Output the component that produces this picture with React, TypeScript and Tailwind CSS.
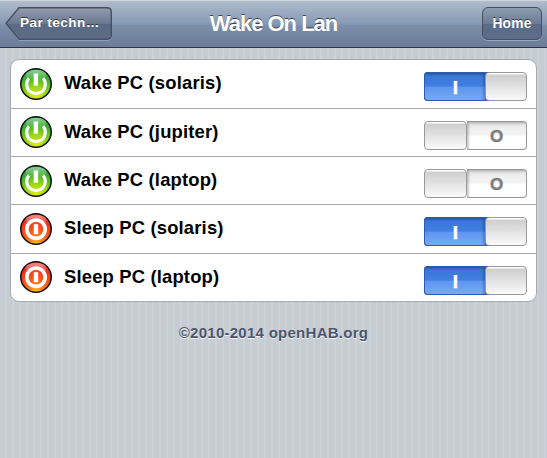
import React from "react";

type Item = { label: string; kind: "wake" | "sleep"; on: boolean; row: string; icon: string };

const items: Item[] = [
  { label: "Wake PC (solaris)", kind: "wake", on: true, row: "h-[49px] border-b", icon: "mt-2" },
  { label: "Wake PC (jupiter)", kind: "wake", on: false, row: "h-[48px] border-b", icon: "mt-[7px]" },
  { label: "Wake PC (laptop)", kind: "wake", on: false, row: "h-[48px] border-b", icon: "mt-2" },
  { label: "Sleep PC (solaris)", kind: "sleep", on: true, row: "h-[49px] border-b", icon: "mt-2" },
  { label: "Sleep PC (laptop)", kind: "sleep", on: true, row: "h-[47px]", icon: "mt-[7px]" },
];

function PowerIcon({ kind }: { kind: Item["kind"] }) {
  const wake = kind === "wake";
  return (
    <svg width="32" height="32" viewBox="0 0 32 32" className="block">
      <defs>
        <radialGradient id="wake" cx="50%" cy="92%" r="92%">
          <stop offset="0" stopColor="#e0f000" />
          <stop offset="0.35" stopColor="#9fd916" />
          <stop offset="0.7" stopColor="#45b52e" />
          <stop offset="1" stopColor="#1d9a3e" />
        </radialGradient>
        <radialGradient id="sleep" cx="50%" cy="100%" r="95%">
          <stop offset="0" stopColor="#ffc400" />
          <stop offset="0.25" stopColor="#ff7b18" />
          <stop offset="0.6" stopColor="#fb4a18" />
          <stop offset="1" stopColor="#f01c24" />
        </radialGradient>
        <linearGradient id="gloss" x1="0" y1="0" x2="0" y2="1">
          <stop offset="0" stopColor="#fff" stopOpacity="0.5" />
          <stop offset="1" stopColor="#fff" stopOpacity="0" />
        </linearGradient>
      </defs>
      <circle cx="16" cy="16" r="15.2" fill={wake ? "url(#wake)" : "url(#sleep)"} stroke="#151515" strokeWidth="1.6" />
      <ellipse cx="16" cy="7" rx="10.5" ry="5" fill="url(#gloss)" />
      {wake ? (
        <>
          <path d="M8.9 10.3A9.3 9.3 0 1 0 23.1 10.3" fill="none" stroke="#fff" strokeWidth="3.2" />
          <rect x="13.7" y="5.5" width="4.4" height="12.2" fill="#fff" />
        </>
      ) : (
        <>
          <circle cx="16" cy="16.2" r="9.2" fill="none" stroke="#fff" strokeWidth="3.7" />
          <rect x="13.8" y="11.2" width="4.4" height="10" fill="#fff" />
        </>
      )}
    </svg>
  );
}

function Toggle({ on }: { on: boolean }) {
  return on ? (
    <div className="mt-3 flex h-[29px] w-[103px] rounded-[4px] bg-[linear-gradient(90deg,#2d5cae_66px,transparent_66px)]">
      <div className="flex w-[61px] justify-center rounded-l-[4px] border border-r-0 border-[#2d5cae] bg-[linear-gradient(#2f66bd_0%,#3a78d8_14%,#3f80e2_49%,#5c96ef_52%,#78a9f5_100%)] shadow-[inset_-2px_1px_2px_#0003]">
        <span className="ml-px mt-[5px] text-[19px] font-bold leading-[19px] text-white [-webkit-text-stroke:0.5px_#fff] [text-shadow:0_-1px_0_#00000080]">I</span>
      </div>
      <div className="w-[42px] rounded-[4px] border border-[#999] bg-[linear-gradient(#fff_0_1px,#cecece_2px,#fafafa_100%)]" />
    </div>
  ) : (
    <div className="mt-3 flex h-[29px] w-[103px]">
      <div className="w-[43px] rounded-[4px] border border-[#999] bg-[linear-gradient(#fff_0_1px,#cecece_2px,#fafafa_100%)]" />
      <div className="flex w-[60px] justify-center rounded-r-[4px] border border-l-0 border-[#999] bg-[linear-gradient(#d6d6d6_0%,#efefef_22%,#f3f3f3_49%,#fff_52%)] shadow-[inset_2px_1px_2px_#0003]">
        <span className="mt-[6px] text-[17px] font-bold leading-[17px] text-[#7f7f7f] [-webkit-text-stroke:0.5px_#7f7f7f]">O</span>
      </div>
    </div>
  );
}

export default function App() {
  return (
    <div className="h-[458px] w-[547px] overflow-hidden bg-[repeating-linear-gradient(90deg,#c5ccd4_0_5px,#cbd2d8_5px_7px)] font-['Liberation_Sans',Arial,sans-serif] text-black">
      <header className="flex h-12 justify-between border-b border-[#2d3642] bg-[linear-gradient(#cdd5df_0_1px,#b0bccd_1px,#8598b3_52%,#7c8eaa_54%,#6a7c98_100%)] px-[5px] pt-[7px] text-white">
        <button className="grid h-[34px] w-[107px]">
          <svg width="107" height="34" viewBox="0 0 107 34" className="col-start-1 row-start-1">
            <defs>
              <linearGradient id="back" x1="0" y1="0" x2="0" y2="1">
                <stop offset="0" stopColor="#929caf" />
                <stop offset="0.5" stopColor="#6b7990" />
                <stop offset="0.52" stopColor="#5b6a84" />
                <stop offset="1" stopColor="#5c6c88" />
              </linearGradient>
            </defs>
            <path d="M14 2H102Q106.5 2 106.5 6.5V29Q106.5 33.3 102 33.3H14L1 17.5Z" fill="none" stroke="#9aa7ba" />
            <path d="M14 .8H102Q106.3 .8 106.3 5V28Q106.3 32.2 102 32.2H14L.9 16.5Z" fill="url(#back)" stroke="#465060" strokeWidth="1.4" />
          </svg>
          <span className="col-start-1 row-start-1 pl-[15px] pt-[8px] text-left text-[13.6px] font-bold leading-[16px] tracking-[0.42px] [text-shadow:0_-1px_0_#00000099]">Par techn…</span>
        </button>
        <h1 className="mr-[47px] pt-[3px] text-[22px] font-bold leading-[27px] tracking-[-1px] [text-shadow:0_-1px_0_#00000099]">Wake On Lan</h1>
        <button className="h-[33px] w-[60px] rounded-[6px] border-[1.5px] border-[#465060] bg-[linear-gradient(#8e9bb0_0%,#6c7b94_50%,#5b6b87_51%,#5c6d8a_100%)] text-[13.8px] font-bold leading-[29px] tracking-[0.2px] shadow-[0_1px_0_#9aa7ba] [text-shadow:0_-1px_0_#00000099]">Home</button>
      </header>
      <main className="pt-[11px]">
        <ul className="ml-[10px] w-[527px] rounded-[9px] border border-[#a8abae] bg-white">
          {items.map((item) => (
            <li key={item.label} className={`flex border-[#a8abae] px-[9px] ${item.row}`}>
              <span className={item.icon}><PowerIcon kind={item.kind} /></span>
              <span className="ml-3 mt-3 flex-1 text-[18.4px] font-bold leading-[21px] tracking-[0.18px]">{item.label}</span>
              <Toggle on={item.on} />
            </li>
          ))}
        </ul>
        <footer className="mt-[22px] text-center text-[15px] font-bold leading-[18px] tracking-[0.27px] text-[#4c566c] [text-shadow:0_1px_0_#ffffffcc]">©2010-2014 openHAB.org</footer>
      </main>
    </div>
  );
}
